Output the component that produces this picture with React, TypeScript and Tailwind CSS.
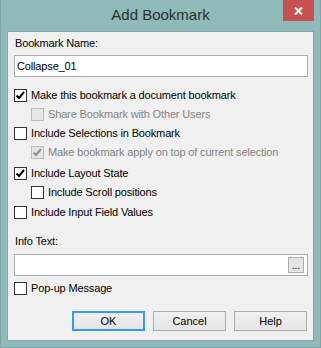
import React from "react";

const font = { fontFamily: '"Liberation Sans", Arial, sans-serif' };

const Check = ({ color }: { color: string }) => (
	<svg width="11" height="11" viewBox="0 0 11 11">
		<path d="M1.5 5.5 L4 8 L9 2" fill="none" stroke={color} strokeWidth="2" />
	</svg>
);

type BoxProps = {
	label: string;
	checked?: boolean;
	disabled?: boolean;
	indent?: boolean;
	className?: string;
};

const CheckRow = ({ label, checked, disabled, indent, className }: BoxProps) => (
	<div
		className={`flex items-center h-[19px] ${indent ? "pl-[17px]" : ""} ${className ?? ""}`}
	>
		<div
			className={`w-[13px] h-[13px] border flex items-center justify-center shrink-0 ${
				disabled
					? "border-[#bcbcbc] bg-[#e6e6e6]"
					: "border-[#333333] bg-white"
			}`}
		>
			{checked && <Check color={disabled ? "#8f8f8f" : "#000000"} />}
		</div>
		<span
			className={`ml-[4px] text-[11px] tracking-[-0.15px] leading-[13px] ${
				disabled ? "text-[#838383]" : "text-black"
			}`}
		>
			{label}
		</span>
	</div>
);

const Button = ({ label, primary }: { label: string; primary?: boolean }) => (
	<button
		className={`w-[73px] h-[20px] text-[11px] text-black bg-gradient-to-b from-[#f0f0f0] to-[#e5e5e5] ${
			primary ? "border-2 border-[#3399ff]" : "border border-[#acacac]"
		}`}
	>
		{label}
	</button>
);

export default function App() {
	return (
		<div
			className="relative w-[321px] h-[348px] bg-[#8fbab8] border-x border-b border-[#7aa5a3] flex flex-col"
			style={font}
		>
			<div className="h-[30px] flex items-center justify-center text-[15px] text-[#2e2e2e]">
				Add Bookmark
			</div>
			<div className="absolute top-0 right-[6px] w-[31px] h-[21px] bg-[#c75050] flex items-center justify-center">
				<svg width="9" height="8" viewBox="0 0 9 8">
					<path d="M1 0.5 L8 7.5 M8 0.5 L1 7.5" stroke="#ffffff" strokeWidth="2" />
				</svg>
			</div>
			<div className="ml-[6px] w-[307px] h-[310px] mt-px border border-[#83a5a3] bg-[#f0f0f0] flex flex-col pl-[6px] pr-[5px]">
				<div className="mt-[5px] ml-px h-[13px] text-[11px] tracking-[-0.15px] leading-[13px] text-black">
					Bookmark Name:
				</div>
				<div className="mt-[5px] h-[22px] w-[294px] border border-[#abadb3] bg-white flex items-center pl-[2px] text-[11px] tracking-[-0.15px] text-black">
					Collapse_01
				</div>
				<CheckRow className="mt-[9px]" label="Make this bookmark a document bookmark" checked />
				<CheckRow label="Share Bookmark with Other Users" disabled indent />
				<CheckRow label="Include Selections in Bookmark" />
				<CheckRow
					label="Make bookmark apply on top of current selection"
					checked
					disabled
					indent
				/>
				<CheckRow className="mt-[2px]" label="Include Layout State" checked />
				<CheckRow label="Include Scroll positions" indent />
				<CheckRow className="mt-px" label="Include Input Field Values" />
				<div className="mt-[13px] ml-px h-[13px] text-[11px] tracking-[-0.15px] leading-[13px] text-black">
					Info Text:
				</div>
				<div className="mt-[6px] h-[22px] w-[294px] border border-[#abadb3] bg-white flex items-center justify-end pr-[3px]">
					<div className="w-[16px] h-[16px] border border-[#acacac] bg-[#e5e5e5] flex items-end justify-center text-[10px] leading-[12px] text-black">
						...
					</div>
				</div>
				<CheckRow className="mt-[3px]" label="Pop-up Message" />
				<div className="mt-[13px] flex justify-end gap-[8px] pr-px">
					<Button label="OK" primary />
					<Button label="Cancel" />
					<Button label="Help" />
				</div>
			</div>
		</div>
	);
}
